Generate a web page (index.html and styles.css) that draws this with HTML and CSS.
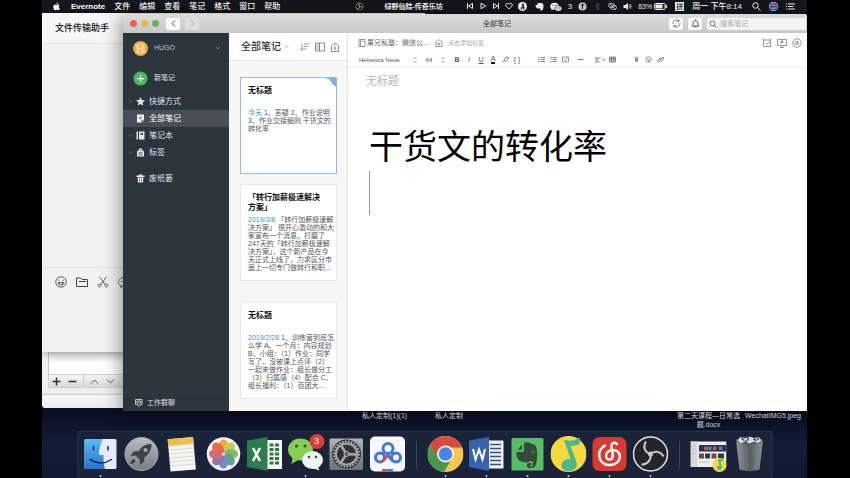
FILE: index.html
```html
<!DOCTYPE html>
<html lang="zh-CN">
<head>
<meta charset="utf-8">
<title>Evernote</title>
<link rel="stylesheet" href="styles.css">
</head>
<body>
<div class="desktop">
  <header class="menubar">
    <svg class="i9" viewBox="0 0 18 18"><path fill="#fff" d="M12 1c0 2-1.500 3.500-3.200 3.500C8.600 2.700 10.200 1.200 12 1zM9 5.800c.8 0 1.800-.9 3.200-.9 1.300 0 2.300.6 2.900 1.500-2.600 1.600-2.100 5 .6 6-.6 1.800-2 4-3.400 4-1.200 0-1.600-.7-3-.7s-1.900.7-3 .7C4.500 16.400 2.500 12.800 2.500 10c0-3.200 2-5 4-5 1.200 0 2 .8 2.500.8z"/></svg>
    <nav class="menus">
      <a href="#" class="app-name">Evernote</a><a href="#">文件</a><a href="#">编辑</a><a href="#">查看</a><a href="#">笔记</a><a href="#">格式</a><a href="#">窗口</a><a href="#">帮助</a>
    </nav>
    <div class="playing">
      <svg class="i9" viewBox="0 0 18 18" fill="none" stroke-width="2"><circle cx="9" cy="9" r="7.500" stroke="#8b6a62"/><path stroke="#b3aaa8" d="M9 2c-3 3-1 6 1 7M4 14c4 0 5-3 5-5M15 12c-2-4-5-4-7-2"/></svg>
      <span>绿野仙踪-传奇乐坊</span>
    </div>
    <div class="player">
      <svg class="i8" viewBox="0 0 16 16" fill="none" stroke="#fff" stroke-width="2"><path d="M3 2v12M13 3v10L5 8z"/></svg>
      <svg class="i8" viewBox="0 0 16 16" fill="none" stroke="#fff" stroke-width="2"><path d="M4 2.500v11L13 8z"/></svg>
      <svg class="i8" viewBox="0 0 16 16" fill="none" stroke="#fff" stroke-width="2"><path d="M13 2v12M3 3v10l8-5z"/></svg>
      <svg class="i8" viewBox="0 0 16 16" fill="none" stroke="#fff" stroke-width="1.800"><path d="M8 14L2 8C-.5 4 5 .5 8 4.500 11 .5 16.500 4 14 8z"/></svg>
      <svg class="i9" viewBox="0 0 16 16"><circle cx="8" cy="8" r="8" fill="#fff"/><path fill="#15171f" d="M7 2l4 2-1 3c3 3 1 7-2 7s-4-3-2-5l2-1z"/><path fill="#fff" d="M7 10h2v5H7z"/></svg>
    </div>
    <div class="status">
      <svg class="i9" viewBox="0 0 18 18"><path fill="#fff" d="M5 2h6c5 0 6 2 6 6 0 6-1 9-5 9-2 0-3-2-1-3l-1-1c-5 1-9-1-9-7h4z"/></svg>
      <svg class="i12" viewBox="0 0 24 18"><ellipse cx="9" cy="7.500" rx="8.500" ry="7" fill="#fff"/><path fill="#fff" d="M3 11v5l4-3z"/><ellipse cx="16.500" cy="12" rx="7" ry="5.500" fill="#fff" stroke="#15171f"/><path d="M6 5.500h.1M12 5.500h.1M14 11h.1M19 11h.1" stroke="#15171f" stroke-width="2" stroke-linecap="round"/></svg>
      <span>3</span>
      <svg class="i9" viewBox="0 0 18 18"><circle cx="9" cy="9" r="8" fill="#ddd"/><path d="M5 6h8M9 6v8M9 3v2" stroke="#15171f" stroke-width="2"/></svg>
      <svg class="i9 dim" viewBox="0 0 18 18" fill="none" stroke="#fff" stroke-width="1.500"><path d="M5 5l8 8-4 3V2l4 3-8 8"/></svg>
      <svg class="i9" viewBox="0 0 18 18" fill="none" stroke="#cfd1d6" stroke-width="1.800"><rect x="1" y="3" width="12" height="8" rx="4"/><rect x="5" y="7" width="12" height="8" rx="4"/><path d="M2 2l14 14"/></svg>
      <svg class="i9" viewBox="0 0 18 18"><path fill="#fff" d="M1 6h4l5-4v14l-5-4H1z"/><path d="M12 6q3 3 0 6M14 4q5 5 0 10" fill="none" stroke="#fff" stroke-width="1.500"/></svg>
      <span class="battery">83%<svg class="i13" viewBox="0 0 26 18"><rect x="1" y="3" width="21" height="12" rx="2" fill="none" stroke="#fff" stroke-width="2"/><path fill="#fff" d="M3 5h14v8H3zM23 6h3v6h-3z"/></svg></span>
      <span class="ime">拼</span>
      <time>周一 下午8:14</time>
    </div>
    <div class="tools">
      <svg class="i9" viewBox="0 0 18 18" fill="none" stroke="#fff" stroke-width="2"><circle cx="7" cy="7" r="5.500"/><path d="M11 11l6 6"/></svg>
      <svg class="i9" viewBox="0 0 18 18"><circle cx="9" cy="9" r="9" fill="#d8dcf0"/><circle cx="9" cy="9" r="7.500" fill="#3a4aa8"/><path fill="#e0559a" d="M3 8c4-6 9-4 12 0-4-1-7 3-12 0z"/><path fill="#4cc9df" d="M4 11c4 2 8-1 11-1-2 5-8 7-11 1z"/></svg>
      <svg class="i9" viewBox="0 0 18 18" stroke="#fff" stroke-width="2"><path d="M0 4h2M4 4h14M0 9h2M4 9h11M0 14h2M4 14h14"/></svg>
    </div>
  </header>

  <section class="window prefs">
    <div class="prefs-list"></div>
    <div class="prefs-bar">
      <button aria-label="添加"><svg class="i11" viewBox="0 0 22 22" stroke="#333" stroke-width="3"><path d="M3 11h16M11 3v16"/></svg></button>
      <button aria-label="移除"><svg class="i11" viewBox="0 0 22 22" stroke="#333" stroke-width="3"><path d="M3 11h16"/></svg></button>
      <i class="bar-split"></i>
      <button aria-label="上移"><svg class="i11" viewBox="0 0 22 22" fill="none" stroke="#555" stroke-width="2"><path d="M4 15l7-7 7 7"/></svg></button>
      <button aria-label="下移"><svg class="i11" viewBox="0 0 22 22" fill="none" stroke="#555" stroke-width="2"><path d="M4 7l7 7 7-7"/></svg></button>
    </div>
    <div class="prefs-foot"></div>
  </section>

  <section class="window chat">
    <h2>文件传输助手</h2>
    <div class="chat-log"></div>
    <div class="chat-tools">
      <svg class="i12" viewBox="0 0 24 24" fill="none" stroke="#555" stroke-width="1.800"><circle cx="12" cy="12" r="10.500"/><path d="M6 13h12c0 7-12 7-12 0zM9 14v4M15 14v4M8 7v3M16 7v3"/></svg>
      <svg class="i12" viewBox="0 0 24 24" fill="none" stroke="#444" stroke-width="2"><path d="M1 4h8l3 3h11v14H1zM6 11h14"/></svg>
      <svg class="i12" viewBox="0 0 24 24" fill="none" stroke="#555" stroke-width="1.800"><path d="M5 2l12 16M19 2L7 18"/><circle cx="5" cy="19" r="3"/><circle cx="19" cy="19" r="3"/></svg>
      <svg class="i12" viewBox="0 0 24 24" fill="none" stroke="#666" stroke-width="2"><path d="M12 3C-2 3-2 19 7 19l-2 4 7-4M6 11h8"/></svg>
    </div>
  </section>

  <main class="window evernote">
    <div class="titlebar">
      <div class="lights"><i class="red"></i><i class="yellow"></i><i class="green"></i></div>
      <button class="tb" aria-label="后退"><svg class="i9" viewBox="0 0 18 18" fill="none" stroke="#444" stroke-width="2"><path d="M12 3L6 9l6 6"/></svg></button>
      <button class="tb off" aria-label="前进"><svg class="i9" viewBox="0 0 18 18" fill="none" stroke="#aaa" stroke-width="2"><path d="M6 3l6 6-6 6"/></svg></button>
      <h1>全部笔记</h1>
      <button class="tb" aria-label="同步"><svg class="i9" viewBox="0 0 18 18" fill="none" stroke="#666" stroke-width="1.600"><path d="M2 10a7 7 0 0 1 12-6M16 8a7 7 0 0 1-12 6M14 1v4h-4M4 17v-4h4"/></svg></button>
      <button class="tb" aria-label="通知"><svg class="i9" viewBox="0 0 18 18" fill="none" stroke="#444" stroke-width="1.800"><path d="M2 14h14l-2-3c0-5-1-8-5-8s-5 3-5 8zM9 1v2M7 16h4"/></svg></button>
      <label class="search"><svg class="i8" viewBox="0 0 16 16" fill="none" stroke="#555" stroke-width="1.600"><circle cx="7" cy="7" r="5"/><path d="M10.500 10.500L15 15"/></svg><input type="search" placeholder="搜索笔记" aria-label="搜索笔记"></label>
    </div>

    <div class="panes">
      <aside class="sidebar">
        <button class="account">
          <svg class="i15" viewBox="0 0 30 30"><circle cx="15" cy="15" r="15" fill="#e9ab3f"/><path d="M8 6v18M12 4v22M18 4v22M22 6v18M12 15h6" stroke="#fbe9c4" stroke-width="2"/></svg>
          <span>HUGO</span>
          <svg class="i6" viewBox="0 0 12 12" fill="none" stroke="#6f7882" stroke-width="2"><path d="M2 4l4 4 4-4"/></svg>
        </button>
        <button class="new-note">
          <svg class="i15" viewBox="0 0 30 30"><circle cx="15" cy="15" r="14" fill="#4cb560"/><path d="M15 8v14M8 15h14" stroke="#fff" stroke-width="2.500"/></svg>
          <span>新笔记</span>
        </button>
        <nav class="side-nav">
          <a href="#"><svg class="i5" viewBox="0 0 10 10" fill="none" stroke="#5d6670" stroke-width="2"><path d="M3 1l4 4-4 4"/></svg><svg class="i9" viewBox="0 0 18 18"><path fill="#e3e7eb" d="M9 0l2.600 6 6.400.6-4.800 4.300L14.600 17.500 9 14l-5.600 3.500 1.400-6.600L0 6.600 6.400 6z"/></svg>快捷方式</a>
          <a href="#" class="current"><i class="i5"></i><svg class="i9" viewBox="0 0 18 18"><path fill="#fff" d="M2 1h14v11l-5 5H2z"/><path d="M5 6h8M5 9h6M11 16v-4h4" stroke="#59616c" stroke-width="1.500" fill="none"/></svg>全部笔记</a>
          <a href="#"><svg class="i5" viewBox="0 0 10 10" fill="none" stroke="#5d6670" stroke-width="2"><path d="M1 3l4 4 4-4"/></svg><svg class="i9" viewBox="0 0 18 18"><path fill="#e3e7eb" d="M1 1h3v16H1zM6 1h11v16H6z"/><path fill="#47505b" d="M9 4h5v4H9z"/></svg>笔记本</a>
          <a href="#"><svg class="i5" viewBox="0 0 10 10" fill="none" stroke="#5d6670" stroke-width="2"><path d="M1 3l4 4 4-4"/></svg><svg class="i9" viewBox="0 0 18 18"><path fill="#e3e7eb" d="M9 0l4 3v2l3 2v10H2V7l3-2V3z"/><path d="M9 3v3M6 9h6v5H6z" stroke="#47505b" stroke-width="1.500" fill="none"/></svg>标签</a>
          <a href="#" class="trash-link"><i class="i5"></i><svg class="i9" viewBox="0 0 18 18"><path fill="#e3e7eb" d="M6 1h6v2h5v3H1V3h5zM3 7h12l-1 10H4z"/><path d="M7 9v6M11 9v6" stroke="#47505b" stroke-width="1.200"/></svg>废纸篓</a>
        </nav>
        <button class="work-chat"><svg class="i8" viewBox="0 0 16 16" fill="none" stroke="#cfd4d9" stroke-width="1.800"><path d="M1 1h13v10h-3l-3 4-3-4H1zM4 4h7v4H4z"/></svg>工作群聊</button>
      </aside>

      <section class="notes">
        <header class="notes-head">
          <h2>全部笔记</h2>
          <svg class="i5" viewBox="0 0 10 10" fill="none" stroke="#999" stroke-width="1.500"><path d="M1 3l4 4 4-4"/></svg>
          <div class="notes-tools">
            <button aria-label="排序"><svg class="i10" viewBox="0 0 20 20" fill="none" stroke="#777" stroke-width="1.500"><path d="M4 3v13M1 13l3 4 3-4M8 4h11M8 9h8M8 14h5"/></svg></button>
            <button aria-label="视图"><svg class="i10" viewBox="0 0 20 20" fill="none" stroke="#666" stroke-width="1.500"><path d="M1 2h18v16H1zM9 2v16M3 6h4M3 10h4M3 14h4"/></svg></button>
            <button aria-label="标签"><svg class="i10" viewBox="0 0 20 20" fill="none" stroke="#666" stroke-width="1.500"><path d="M10 1l4 4 3 3v11H3V8l3-3zM10 4v3M10 9v7M7 12h6"/></svg></button>
          </div>
        </header>
        <div class="cards">
          <article class="card selected">
            <h3>无标题</h3>
            <p><time>今天</time> 1、答疑 2、作业说明<br>3、作业交接细则 干货文的<br>转化率</p>
          </article>
          <article class="card">
            <h3>「转行加薪极速解决<br>方案」</h3>
            <p><time>2019/3/8</time> 「转行加薪极速解<br>决方案」 很开心激动的和大<br>家宣布一个消息，打磨了<br>247天的「转行加薪极速解<br>决方案」，这个新产品在今<br>天正式上线了，力求区分市<br>面上一切专门做转行和职…</p>
          </article>
          <article class="card next-month">
            <h3>无标题</h3>
            <p><time>2019/2/28</time> 1、训练营到底怎<br>么学 A、一个月：内容规划<br>B、小组：（1）作业：同学<br>写了，没被课上点评（2）<br>一起来做作业：组长做分工<br>（3）归属感（4）配合 C、<br>组长福利：（1）百团大…</p>
          </article>
        </div>
      </section>

      <section class="editor">
        <div class="meta">
          <button class="book"><svg class="i8" viewBox="0 0 16 16" fill="none" stroke="#777" stroke-width="1.500"><path d="M2 1h12v14H2zM5 1v14M8 5h4"/></svg>果兄私塾：微信公…</button>
          <svg class="i8" viewBox="0 0 16 16" fill="none" stroke="#777" stroke-width="1.500"><path d="M8 1l3 3 3 2v9H2V6l3-2zM8 7v6M5 10h6"/></svg>
          <input class="tag-input" placeholder="点击添加标签" aria-label="标签">
          <div class="meta-tools">
            <button aria-label="提醒"><svg class="i10" viewBox="0 0 20 20" fill="none" stroke="#777" stroke-width="1.500"><path d="M3 4h14v13H3zM1 4l3-3M19 4l-3-3M7 10l3 3 5-6"/></svg></button>
            <button aria-label="演示"><svg class="i10" viewBox="0 0 20 20" fill="none" stroke="#777" stroke-width="1.500"><path d="M1 3h18v12H1zM6 19h8M10 15v4M8 12V6h4v3H8"/></svg></button>
            <button aria-label="信息"><svg class="i10" viewBox="0 0 20 20" fill="none" stroke="#777" stroke-width="1.500"><circle cx="10" cy="10" r="8.500"/><circle cx="9" cy="10" r="3"/><path d="M12 6v8"/></svg></button>
          </div>
        </div>
        <div class="format">
          <button class="face">Helvetica Neue</button>
          <svg class="i6" viewBox="0 0 12 12" fill="none" stroke="#777" stroke-width="1.500"><path d="M3 4l3-3 3 3M3 8l3 3 3-3"/></svg>
          <button class="size">64</button>
          <svg class="i6" viewBox="0 0 12 12" fill="none" stroke="#777" stroke-width="1.500"><path d="M3 4l3-3 3 3M3 8l3 3 3-3"/></svg>
          <div class="group">
            <button><b>B</b></button><button><em>I</em></button><button><u>U</u></button><button><span class="color">A</span></button>
            <button aria-label="高亮"><svg class="i7" viewBox="0 0 14 14" fill="none" stroke="#666" stroke-width="1.600"><path d="M1 13l3-4M4 9l4-7 5 1-1 4-5 4z"/></svg></button>
            <button>{ }</button>
          </div>
          <div class="group">
            <button aria-label="项目列表"><svg class="i7" viewBox="0 0 14 14" stroke="#666" stroke-width="1.500"><path d="M0 3h3M5 3h9M0 7h3M5 7h9M0 11h3M5 11h9"/></svg></button>
            <button aria-label="编号列表"><svg class="i7" viewBox="0 0 14 14" stroke="#666" stroke-width="1.500"><path d="M2 1v5M0 11h3M5 3h9M5 7h9M5 11h9"/></svg></button>
            <button aria-label="待办"><svg class="i7" viewBox="0 0 14 14" fill="none" stroke="#777" stroke-width="1.500"><path d="M1 2h12v10H1zM4 6l3 3 5-6"/></svg></button>
          </div>
          <button aria-label="分隔线"><svg class="i7" viewBox="0 0 14 14" stroke="#666" stroke-width="1.800"><path d="M1 7h12"/></svg></button>
          <div class="group">
            <button aria-label="对齐"><svg class="i12" viewBox="0 0 24 14" fill="none" stroke="#666" stroke-width="1.700"><path d="M2 3h11M2 7h7M2 11h9M16 5l3 3 3-3"/></svg></button>
            <button aria-label="表格"><svg class="i7" viewBox="0 0 14 14" fill="none" stroke="#666" stroke-width="1.500"><path d="M1 2h12v10H1zM1 5h12M1 8h12M5 2v10M9 2v10"/></svg></button>
          </div>
          <div class="group">
            <button aria-label="附件"><svg class="i7" viewBox="0 0 14 14" fill="none" stroke="#666" stroke-width="1.500"><path d="M5 3v7q2 4 4 0V3q-2-3-4 0M7 5v5"/></svg></button>
            <button aria-label="录音"><svg class="i7" viewBox="0 0 14 14" fill="none" stroke="#777" stroke-width="1.500"><circle cx="7" cy="7" r="5.500"/><path d="M4 5l3 4 3-4M7 9v3"/></svg></button>
            <button aria-label="链接"><svg class="i7" viewBox="0 0 14 14" fill="none" stroke="#666" stroke-width="1.700"><path d="M6 9l-3 3-2-2 5-6 2 2M7 7l5-5 1 3-4 5-2-1"/></svg></button>
          </div>
        </div>
        <input class="note-title" placeholder="无标题" aria-label="笔记标题">
        <div class="note-body"><p>干货文的转化率</p><i class="caret"></i></div>
      </section>
    </div>
  </main>

  <div class="file file-a">私人定制(1)(1)</div>
  <div class="file file-b">私人定制</div>
  <div class="file file-c">第二天课程—日常选<br>题.docx</div>
  <div class="file file-d">WechatIMG5.jpeg</div>

  <footer class="dock">
    <a href="#" class="on" aria-label="Finder"><svg viewBox="0 0 72 72"><defs><linearGradient id="fb" x2="0" y2="1"><stop stop-color="#5db8f5"/><stop offset="1" stop-color="#2574d6"/></linearGradient></defs><rect x="4" y="6" width="64" height="60" rx="3" fill="#e4ebf6"/><path fill="url(#fb)" d="M7 6h34c-5 9-8 20-8 32h9c0 10 0 19 3 28H7q-3 0-3-3V9q0-3 3-3z"/><path d="M22 21v7M51 21v7M15 47q22 14 43 0" stroke="#182b45" stroke-width="3" fill="none" stroke-linecap="round"/></svg></a>
    <a href="#" aria-label="Launchpad"><svg viewBox="0 0 72 72"><defs><linearGradient id="lp" x2="0" y2="1"><stop stop-color="#b9bdc0"/><stop offset="1" stop-color="#787e82"/></linearGradient></defs><circle cx="36" cy="36" r="33" fill="url(#lp)" stroke="#a3adb0" stroke-width="2"/><path fill="#3c4247" d="M56 16c-12 0-20 5-25 14l-11 1-6 9 10-1 9 9-1 10 9-6 1-10c9-5 14-14 14-26zM21 46c-5 1-7 6-7 10 5 0 9-2 10-7z"/><circle cx="44" cy="28" r="4" fill="#a6abad"/></svg></a>
    <a href="#" aria-label="备忘录"><svg viewBox="0 0 72 72"><g transform="rotate(-5 36 36)"><rect x="9" y="4" width="51" height="65" fill="#f6f5ef"/><path fill="#f0bd45" d="M9 4h51v13H9z"/><path d="M9 18h51M9 26h51M9 34h51M9 42h51M9 50h51M9 58h51" stroke="#d2d2d0" stroke-width="1.500"/></g></svg></a>
    <a href="#" aria-label="照片"><svg viewBox="0 0 72 72"><circle cx="36" cy="36" r="33.500" fill="#f4f3f1"/><g opacity=".88"><ellipse cx="36" cy="21" rx="10" ry="14" fill="#f29a2a"/><ellipse cx="36" cy="21" rx="10" ry="14" fill="#c3c838" transform="rotate(45 36 36)"/><ellipse cx="36" cy="21" rx="10" ry="14" fill="#74b553" transform="rotate(90 36 36)"/><ellipse cx="36" cy="21" rx="10" ry="14" fill="#459c88" transform="rotate(135 36 36)"/><ellipse cx="36" cy="21" rx="10" ry="14" fill="#5d82c0" transform="rotate(180 36 36)"/><ellipse cx="36" cy="21" rx="10" ry="14" fill="#8e60a8" transform="rotate(225 36 36)"/><ellipse cx="36" cy="21" rx="10" ry="14" fill="#c95a74" transform="rotate(270 36 36)"/><ellipse cx="36" cy="21" rx="10" ry="14" fill="#e05638" transform="rotate(315 36 36)"/></g><circle cx="36" cy="36" r="3" fill="#fff"/></svg></a>
    <a href="#" aria-label="Excel"><svg viewBox="0 0 72 72"><path fill="#f4f7f4" d="M38 8h33v58H38z"/><path fill="#2a7a4a" d="M46 15h8v6h-8zM57 15h8v6h-8zM46 24h8v6h-8zM57 24h8v6h-8zM46 33h8v6h-8zM57 33h8v6h-8zM46 42h8v6h-8zM57 42h8v6h-8zM46 51h8v6h-8zM57 51h8v6h-8z"/><path fill="#2d7d4c" d="M1 9l41-7v68L1 62z"/><path d="M13 24l14 26M27 24L13 50" stroke="#fff" stroke-width="5"/></svg></a>
    <a href="#" class="on" aria-label="微信"><svg viewBox="0 0 72 72"><ellipse cx="26" cy="27" rx="25" ry="22" fill="#85cf55"/><path fill="#85cf55" d="M10 43l-2 13 13-8z"/><ellipse cx="50" cy="48" rx="21" ry="18" fill="#f1f3f2"/><path fill="#f1f3f2" d="M60 60l4 9-14-5z"/><g fill="#3a493a"><circle cx="18" cy="20" r="3"/><circle cx="35" cy="20" r="3"/><circle cx="43" cy="42" r="2.500"/><circle cx="57" cy="42" r="2.500"/></g></svg><span class="badge">3</span></a>
    <a href="#" aria-label="系统偏好设置"><svg viewBox="0 0 72 72"><defs><linearGradient id="sp" x2="0" y2="1"><stop stop-color="#aeb3b6"/><stop offset="1" stop-color="#6d7276"/></linearGradient></defs><rect x="2" y="5" width="67" height="63" rx="3" fill="url(#sp)"/><circle cx="36" cy="36" r="29" fill="#2f3336"/><circle cx="36" cy="36" r="25" fill="none" stroke="#bfc3c5" stroke-width="4" stroke-dasharray="3 3"/><circle cx="36" cy="36" r="21" fill="none" stroke="#a5a9ab" stroke-width="4"/><path d="M36 36l20 1M36 36L25 19M36 36L25 53" stroke="#a5a9ab" stroke-width="5"/><circle cx="36" cy="36" r="5" fill="#54595c" stroke="#b5b9bb" stroke-width="2"/></svg></a>
    <a href="#" aria-label="百度网盘"><svg viewBox="0 0 72 72"><rect x="1" y="1" width="70" height="70" rx="10" fill="#f8f9fc"/><g fill="none" stroke-width="6"><circle cx="37" cy="25" r="10" stroke="#3f78d8"/><circle cx="21" cy="43" r="9" stroke="#3f78d8"/><circle cx="53" cy="43" r="9" stroke="#3f78d8"/><path d="M34 36l12 13" stroke="#3f78d8"/><path d="M26 50l10-11" stroke="#d94a42"/></g><path fill="#d14f4c" d="M25 66h11v5H25z"/><path fill="#4676c8" d="M36 66h11v5H36z"/></svg></a>
    <i class="split"></i>
    <a href="#" class="on" aria-label="Chrome"><svg viewBox="0 0 72 72"><circle cx="36" cy="36" r="36" fill="#f3c74c"/><path fill="#d54c3f" d="M5 18a36 36 0 0 1 62 0l3 5H36L21 45z"/><path fill="#459a50" d="M5 18a36 36 0 0 0 28 54l15-26-12 6-15-8z"/><circle cx="36" cy="36" r="17" fill="#f3f5f8"/><circle cx="36" cy="36" r="13.500" fill="#4a83e4"/></svg></a>
    <a href="#" class="on" aria-label="Word"><svg viewBox="0 0 72 72"><path fill="#eef2f8" d="M38 9h32v56H38z"/><path d="M43 17h22M43 25h22M43 33h22M43 41h22M43 49h22M43 57h22" stroke="#31528d" stroke-width="3"/><path fill="#3763ad" d="M1 9l40-7v68L1 62z"/><path d="M9 26l5 21 7-20 7 20 5-21" stroke="#fff" stroke-width="4" fill="none"/></svg></a>
    <a href="#" class="on" aria-label="Evernote"><svg viewBox="0 0 72 72"><rect x="4" y="4" width="64" height="65" rx="3" fill="#56bd62"/><path fill="#334a3c" d="M29 13h9c3 0 4 2 7 3 8 1 9 6 10 14 1 10 0 22-3 29-2 5-8 6-13 5-6-1-6-10 1-10h4v4h-3v3c4 1 6-1 6-6 0-6-3-5-6-5-3 1-2 3-5 3-6 0-17-1-20-9-2-4-3-8-2-12h12q3 0 3-3zM16 28l9-11v10z"/><path d="M44 32q4-2 6 2" fill="none" stroke="#56bd62" stroke-width="2"/></svg></a>
    <a href="#" class="on" aria-label="QQ音乐"><svg viewBox="0 0 72 72"><circle cx="36" cy="36" r="36" fill="#f6d83f"/><path fill="#4fb58c" d="M27 7q14 7 32-4l-1 13q-11 5-18 4l12 32c4 12-8 20-19 18-16-3-15-25 7-24z"/></svg></a>
    <a href="#" class="on" aria-label="网易云音乐"><svg viewBox="0 0 72 72"><rect x="2" y="2" width="68" height="68" rx="14" fill="#d93a30"/><path d="M27 19c-18 8-15 39 9 39 26 0 27-31 6-30-15 1-17 19-6 19 10 0 6-13 4-25-1-8 6-11 11-6" stroke="#fff" stroke-width="5" fill="none" stroke-linecap="round"/></svg></a>
    <a href="#" class="on" aria-label="OBS"><svg viewBox="0 0 72 72"><circle cx="36" cy="36" r="34" fill="#24242a" stroke="#e3e3e5" stroke-width="3"/><g fill="none" stroke="#c9c9cc" stroke-width="4"><path d="M36 36c-12-4-16-15-9-25M36 36c9-8 21-5 26 5M36 36c2 12-6 21-18 21"/></g><circle cx="36" cy="36" r="5" fill="#c9c9cc"/></svg></a>
    <i class="split"></i>
    <a href="#" aria-label="最小化窗口"><svg viewBox="0 0 72 72"><rect x="0" y="11" width="72" height="51" fill="#eceef0"/><path fill="#d4dbd8" d="M0 11h14v51H0z"/><path fill="#2b3047" d="M17 18h54v13H17z"/><path fill="#c65463" d="M27 21h8v7h-8zM45 21h7v7h-7z"/><path fill="#5087b6" d="M36 21h6v7h-6zM57 21h7v7h-7z"/><path fill="#6d4b42" d="M17 35h10v10H17zM42 35h10v10H42z"/><path fill="#333944" d="M29 35h10v10H29zM55 35h12v10H55z"/><path stroke="#babdc3" stroke-width="2" d="M3 20h8M3 27h8M3 35h8M17 52h20"/><circle cx="58" cy="58" r="14" fill="#f2dc44"/><path fill="#55b780" d="M55 47l10-2v5l-5 1 3 12c0 7-12 6-10-1 1-3 4-3 5-3z"/></svg></a>
    <a href="#" aria-label="废纸篓"><svg viewBox="0 0 72 72"><defs><linearGradient id="tr"><stop stop-color="#90979a"/><stop offset=".5" stop-color="#555d60"/><stop offset="1" stop-color="#8a9194"/></linearGradient></defs><path fill="url(#tr)" d="M9 8h54l-7 59q-20 7-40 0z"/><ellipse cx="36" cy="9" rx="27" ry="7" fill="#535a60"/><path fill="#d8dadd" d="M12 9l6-7 10 3 8-4 10 4 8-3 6 7-7 5-8-3-9 4-9-4-8 4z"/><path stroke="#444a52" stroke-width="3" d="M20 4l5 5M34 3l-2 6M44 6l6 3M54 4l-2 4M27 9l4 3"/><path d="M20 23l5 41M32 24l1 42M52 23l-5 41" stroke="#9ca3a5" opacity=".5"/></svg></a>
  </footer>
</div>
</body>
</html>
```
FILE: styles.css
```css
* { box-sizing: border-box; }
body {
  margin: 0;
  padding: 0 43px 0 42px;
  background: #000;
  color: #333;
  font: 8px/12px "Liberation Sans", "Noto Sans CJK SC", sans-serif;
}
h1, h2, h3, p { margin: 0; font-weight: 400; }
a { color: inherit; text-decoration: none; }
button, input { margin: 0; padding: 0; border: 0; background: none; font: inherit; color: inherit; outline: 0; }
button { display: flex; align-items: center; justify-content: center; white-space: nowrap; }
svg { display: block; flex: none; }
.i5 { width: 5px; height: 5px; }
.i6 { width: 6px; height: 6px; }
.i7 { width: 7px; height: 7px; }
.i8 { width: 8px; height: 8px; }
.i9 { width: 9px; height: 9px; }
.i10 { width: 10px; height: 10px; }
.i11 { width: 11px; height: 11px; }
.i12 { width: 12px; height: 12px; }
.i13 { width: 13px; height: 9px; }
.i15 { width: 15px; height: 15px; }

.desktop {
  position: relative;
  min-height: 100vh;
  overflow: hidden;
  background: linear-gradient(#10162a 0, #10162a 85%, #0a0e20 86%, #131d38 93%, #0f1931 100%);
}

/* Menu bar */
.menubar {
  display: flex;
  align-items: center;
  height: 13px;
  padding: 0 12px 0 10px;
  background: #15171f;
  color: #fff;
  font-weight: 500;
  white-space: nowrap;
}
.menus { display: flex; gap: 9px; margin-left: 10px; }
.app-name { font-weight: 700; }
.playing { display: flex; align-items: center; gap: 20px; margin-left: auto; font-size: 7px; font-weight: 700; }
.player { display: flex; gap: 5px; margin-left: 23px; }
.status { display: flex; align-items: center; gap: 6px; margin-left: 8px; }
.status .dim { opacity: .25; }
.battery { display: flex; align-items: center; gap: 2px; font-size: 7px; }
.ime { margin: 0 2px; padding: 0 1px; background: #fff; color: #15171f; font-size: 7px; line-height: 9px; }
.tools { display: flex; gap: 8px; margin-left: 10px; }

/* Windows */
.window { position: absolute; overflow: hidden; }
.prefs {
  left: 0; right: 50%; top: 340px; bottom: 70px;
  display: flex;
  flex-direction: column;
  border-radius: 0 0 0 4px;
  background: #f1f1f1;
}
.prefs-list { flex: 1; margin-left: 6px; border-left: 1px solid #c4c4c4; background: linear-gradient(#ddd 30%, #fff 70%); }
.prefs-bar {
  display: flex;
  align-items: center;
  gap: 5px;
  height: 14px;
  margin-left: 6px;
  padding-left: 2px;
  border: 1px solid #d0d0d0;
  background: linear-gradient(#f5f5f5, #d9d9d9);
}
.bar-split { width: 1px; height: 12px; background: #ccc; }
.prefs-foot { height: 20px; background: linear-gradient(#eee 6px, #c9c9c9 6px, #c9c9c9 7px, #f8f8f8 7px, #ececec); }

.chat {
  left: 0; right: 50%; top: 13px; bottom: 126px;
  display: flex;
  flex-direction: column;
  background: #f2f2f2;
  box-shadow: 0 2px 8px rgba(0, 0, 0, .3);
}
.chat h2 { height: 31px; padding-left: 13px; border-bottom: 1px solid #e2e2e2; background: #f7f7f7; color: #111; font-size: 9px; font-weight: 500; line-height: 30px; }
.chat-log { flex: 1; }
.chat-tools { display: flex; gap: 9px; height: 85px; padding: 8px 13px; border-top: 1px solid #e2e2e2; }

.evernote {
  left: 81px; right: 0; top: 14px; bottom: 67px;
  display: flex;
  flex-direction: column;
  border-radius: 3px 3px 0 0;
  background: #fff;
  box-shadow: 0 2px 20px rgba(0, 0, 0, .5);
}
.titlebar {
  display: flex;
  align-items: center;
  gap: 5px;
  height: 19px;
  padding: 0 1px 0 7px;
  background: linear-gradient(#dcdcdc, #c8c8c8);
}
.lights { display: flex; gap: 4px; margin-right: 2px; }
.lights i { width: 7px; height: 7px; border-radius: 50%; }
.red { background: #e5655c; }
.yellow { background: #e9b84c; }
.green { background: #5fb854; }
.tb { width: 14px; height: 12px; border-radius: 2px; background: #fafafa; }
.off { background: #dedede; }
.titlebar h1 { flex: 1; padding-left: 126px; font-size: 7px; text-align: center; }
.search { display: flex; align-items: center; gap: 3px; width: 99px; height: 12px; padding-left: 2px; border-radius: 2px 0 0 2px; background: #f4f4f4; }
.search input { width: 100%; min-width: 0; font-size: 7px; }
input::placeholder { color: #aaa; opacity: 1; }

.panes { display: grid; grid-template-columns: 106px 119px 1fr; flex: 1; min-height: 0; }

/* Sidebar */
.sidebar { display: flex; flex-direction: column; background: #2c343e; color: #dfe3e8; }
.account { justify-content: flex-start; gap: 6px; height: 30px; padding: 0 8px 0 10px; color: #c3c9d0; font-size: 7px; }
.account span { flex: 1; text-align: left; }
.new-note { justify-content: flex-start; gap: 6px; height: 30px; padding-left: 10px; font-size: 7px; }
.side-nav a { display: flex; align-items: center; gap: 3px; height: 17px; padding-left: 5px; }
.side-nav .i9 { margin-right: 1px; }
.side-nav .current { background: #474e58; color: #fff; }
.side-nav .trash-link { margin-top: 9px; }
.work-chat { justify-content: flex-start; gap: 4px; height: 18px; margin-top: auto; padding-left: 12px; border-top: 1px solid #313a45; font-size: 7px; }

/* Note list */
.notes { border-right: 1px solid #e3e3e5; background: #f7f7f8; }
.notes-head { display: flex; align-items: center; gap: 3px; height: 28px; padding: 0 7px 0 12px; border-bottom: 1px solid #e6e6e6; background: #fff; }
.notes-head h2 { font-size: 10px; font-weight: 500; }
.notes-tools { display: flex; gap: 5px; margin-left: auto; }
.cards { padding: 16px 10px 0 11px; }
.card { height: 97px; margin-bottom: 10px; padding: 8px 0 0 7px; border: 1px solid #e8e8ea; background: #fff; white-space: nowrap; }
.card h3 { min-height: 23px; color: #111; font-size: 8px; font-weight: 700; line-height: 10px; }
.card p { color: #555; font-size: 7px; line-height: 8px; }
.card time { color: #3d8fcf; }
.selected { border: 1px solid #8dbde8; background: linear-gradient(45deg, transparent 50%, #79b2e6 50%) top right / 9px 9px no-repeat #fff; }
.next-month { margin-top: 21px; }

/* Editor */
.editor { display: flex; flex-direction: column; background: #fff; }
.meta { display: flex; align-items: center; height: 19px; padding: 0 5px 0 10px; font-size: 7px; color: #666; }
.meta .book { gap: 1px; margin-right: 5px; }
.tag-input { width: 80px; margin-left: 5px; font-size: 6px; }
.meta-tools { display: flex; gap: 5px; margin-left: auto; }
.format { display: flex; align-items: center; height: 16px; padding-left: 11px; border-bottom: 1px solid #ededed; color: #555; font-size: 6px; }
.face { width: 53px; justify-content: flex-start; }
.size { width: 22px; }
.format .group { display: flex; margin-left: 5px; }
.format .group button { min-width: 12px; font-size: 7px; }
.format .group + .group { margin-left: 12px; }
.format .group + button { margin-left: 6px; }
.format button + .group { margin-left: 10px; }
.color { border-bottom: 2px solid #111; line-height: 7px; }
.note-title { height: 26px; padding-left: 18px; font-size: 11px; }
.note-title::placeholder { color: #b5b5b5; }
.note-body { padding: 29px 21px; color: #000; font-size: 34px; line-height: 48px; }
.caret { display: block; width: 1px; height: 44px; background: #999; }

/* Desktop files */
.file { position: absolute; bottom: 58px; color: #ccd0d8; font-size: 7px; line-height: 9px; text-align: center; white-space: nowrap; }
.file-a { left: 320px; }
.file-b { left: 393px; }
.file-c { right: 67px; bottom: 49px; }
.file-d { right: 6px; }

/* Dock */
.dock {
  position: absolute;
  bottom: 0;
  left: 50%;
  transform: translateX(-50%);
  display: flex;
  gap: 5px;
  height: 47px;
  padding: 4px 4px 0;
  border: 1px solid #2a3349;
  border-bottom: 0;
  background: #1a233a;
}
.dock a { position: relative; width: 36px; }
.dock a svg { width: 36px; height: 36px; }
.dock .on::after { content: ""; position: absolute; bottom: 1px; left: 17px; width: 2px; height: 2px; border-radius: 50%; background: #c5cce0; }
.split { width: 12px; height: 28px; margin-top: 5px; background: linear-gradient(90deg, transparent 6px, #3b4459 6px, #3b4459 7px, transparent 7px); }
.badge { position: absolute; top: -2px; right: -1px; width: 15px; height: 15px; border-radius: 50%; background: #dd3d34; color: #fff; font-size: 9px; line-height: 15px; text-align: center; }
```
